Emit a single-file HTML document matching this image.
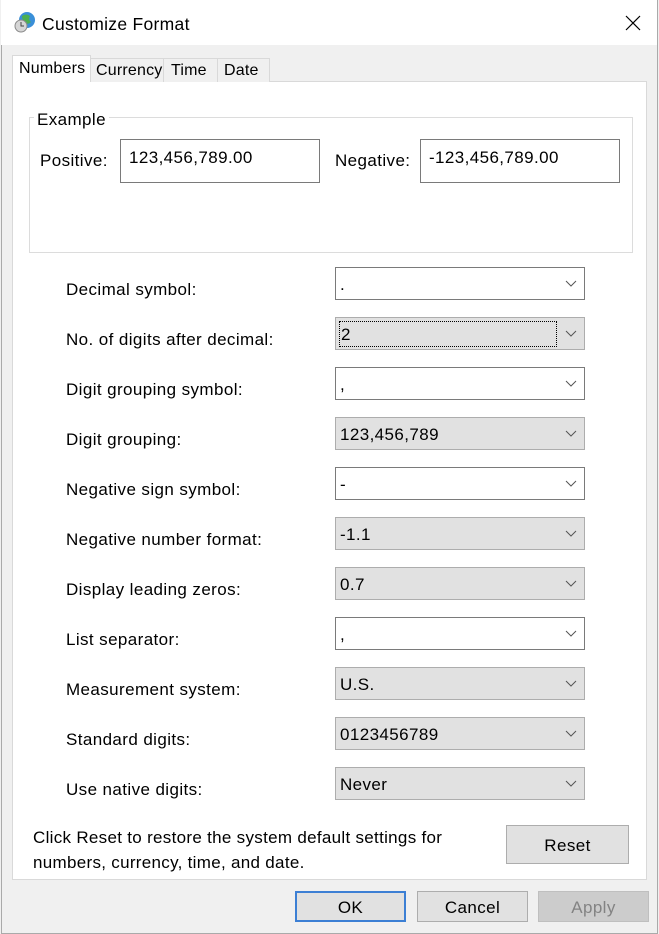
<!DOCTYPE html>
<html><head><style>
*{margin:0;padding:0;box-sizing:border-box}
body{width:659px;height:934px;background:#f0f0f0;font-family:"Liberation Sans",sans-serif;font-size:17px;letter-spacing:0.4px;color:#000;position:relative;overflow:hidden}
.abs{position:absolute}
.win{left:1px;top:0;width:657px;height:934px;border:1px solid #aaa;border-top:none;background:#f0f0f0}
.title{left:1px;top:0;width:656px;height:45px;background:#fff}
.tab{position:absolute;top:58px;height:24px;border:1px solid #d9d9d9;border-bottom:none;background:#f0f0f0;padding:3px 3px;font-size:16px;letter-spacing:0.2px}
.panel{left:12px;top:81px;width:635px;height:799px;background:#fff;border:1px solid #d9d9d9}
.grp{left:29px;top:117px;width:604px;height:136px;border:1px solid #dcdcdc}
.box{border:1px solid #7a7a7a;background:#fff;padding:6px 8px}
.lbl{position:absolute;left:66px}
.cb{position:absolute;left:335px;width:250px;height:33px;border:1px solid #7a7a7a;background:#fff;padding:7px 4px;line-height:20px}
.cb.g{background:#e1e1e1;border-color:#adadad}
.cb svg{position:absolute;right:7px;top:12px}
.btn{position:absolute;border:1px solid #adadad;background:#e1e1e1;text-align:center}
</style></head><body>
<div class="abs win"></div>
<div class="abs title"></div>
<svg class="abs" style="left:13px;top:10px" width="24" height="24" viewBox="0 0 24 24"><circle cx="14" cy="10" r="8" fill="#3a8fd8"/><path d="M9 6q4-3 8 0q-2 4 1 6q-3 3-6 1q-3-3-3-7z" fill="#4caf50"/><circle cx="8" cy="16" r="6" fill="#d6d6d6" stroke="#8a8a8a"/><path d="M8 12v4h3" stroke="#444" fill="none"/></svg>
<div class="abs" style="left:42px;top:14px;font-size:17.5px;letter-spacing:0.3px">Customize Format</div>
<svg class="abs" style="left:625px;top:15px" width="16" height="16"><path d="M1 1L15 15M15 1L1 15" stroke="#000" stroke-width="1.2"/></svg>
<div class="abs panel"></div>
<div class="tab" style="left:12px;top:55px;height:27px;width:79px;background:#fff;border-color:#d9d9d9;z-index:2;padding-top:4px;padding-left:6px">Numbers</div>
<div class="tab" style="left:90px;width:74px;padding-left:5px">Currency</div>
<div class="tab" style="left:163px;width:55px;padding-left:7px">Time</div>
<div class="tab" style="left:217px;width:53px;padding-left:6px">Date</div>
<div class="abs grp"></div>
<div class="abs" style="left:34px;top:110px;background:#fff;padding:0 3px">Example</div>
<div class="abs" style="left:40px;top:151px">Positive:</div>
<div class="abs box" style="left:120px;top:139px;width:200px;height:44px;padding-left:8px;padding-top:8px">123,456,789.00</div>
<div class="abs" style="left:335px;top:151px">Negative:</div>
<div class="abs box" style="left:420px;top:139px;width:200px;height:44px;padding-left:8px;padding-top:8px">-123,456,789.00</div>

<div class="lbl" style="top:280px">Decimal symbol:</div>
<div class="cb" style="top:267px">.<svg width="12" height="8"><path d="M1 1l5 5 5-5" stroke="#555" fill="none"/></svg></div>
<div class="lbl" style="top:330px">No. of digits after decimal:</div>
<div class="cb g" style="top:317px"><span style="display:inline-block;width:218px;border:1px dotted #000;margin-left:-1px;height:26px;margin-top:-4px;line-height:25px;padding-left:1px">2</span><svg width="12" height="8"><path d="M1 1l5 5 5-5" stroke="#555" fill="none"/></svg></div>
<div class="lbl" style="top:380px">Digit grouping symbol:</div>
<div class="cb" style="top:367px">,<svg width="12" height="8"><path d="M1 1l5 5 5-5" stroke="#555" fill="none"/></svg></div>
<div class="lbl" style="top:430px">Digit grouping:</div>
<div class="cb g" style="top:417px">123,456,789<svg width="12" height="8"><path d="M1 1l5 5 5-5" stroke="#555" fill="none"/></svg></div>
<div class="lbl" style="top:480px">Negative sign symbol:</div>
<div class="cb" style="top:467px">-<svg width="12" height="8"><path d="M1 1l5 5 5-5" stroke="#555" fill="none"/></svg></div>
<div class="lbl" style="top:530px">Negative number format:</div>
<div class="cb g" style="top:517px">-1.1<svg width="12" height="8"><path d="M1 1l5 5 5-5" stroke="#555" fill="none"/></svg></div>
<div class="lbl" style="top:580px">Display leading zeros:</div>
<div class="cb g" style="top:567px">0.7<svg width="12" height="8"><path d="M1 1l5 5 5-5" stroke="#555" fill="none"/></svg></div>
<div class="lbl" style="top:630px">List separator:</div>
<div class="cb" style="top:617px">,<svg width="12" height="8"><path d="M1 1l5 5 5-5" stroke="#555" fill="none"/></svg></div>
<div class="lbl" style="top:680px">Measurement system:</div>
<div class="cb g" style="top:667px">U.S.<svg width="12" height="8"><path d="M1 1l5 5 5-5" stroke="#555" fill="none"/></svg></div>
<div class="lbl" style="top:730px">Standard digits:</div>
<div class="cb g" style="top:717px">0123456789<svg width="12" height="8"><path d="M1 1l5 5 5-5" stroke="#555" fill="none"/></svg></div>
<div class="lbl" style="top:780px">Use native digits:</div>
<div class="cb g" style="top:767px">Never<svg width="12" height="8"><path d="M1 1l5 5 5-5" stroke="#555" fill="none"/></svg></div>

<div class="abs" style="left:33px;top:825px;line-height:25px;letter-spacing:0.3px">Click Reset to restore the system default settings for<br>numbers, currency, time, and date.</div>
<div class="btn" style="left:506px;top:825px;width:123px;height:39px;line-height:39px">Reset</div>
<div class="btn" style="left:295px;top:891px;width:111px;height:31px;border:2px solid #3c7fd4;line-height:29px">OK</div>
<div class="btn" style="left:417px;top:891px;width:111px;height:31px;line-height:31px">Cancel</div>
<div class="btn" style="left:538px;top:891px;width:111px;height:31px;line-height:31px;background:#ccc;border-color:#bfbfbf;color:#838383">Apply</div>
</body></html>
